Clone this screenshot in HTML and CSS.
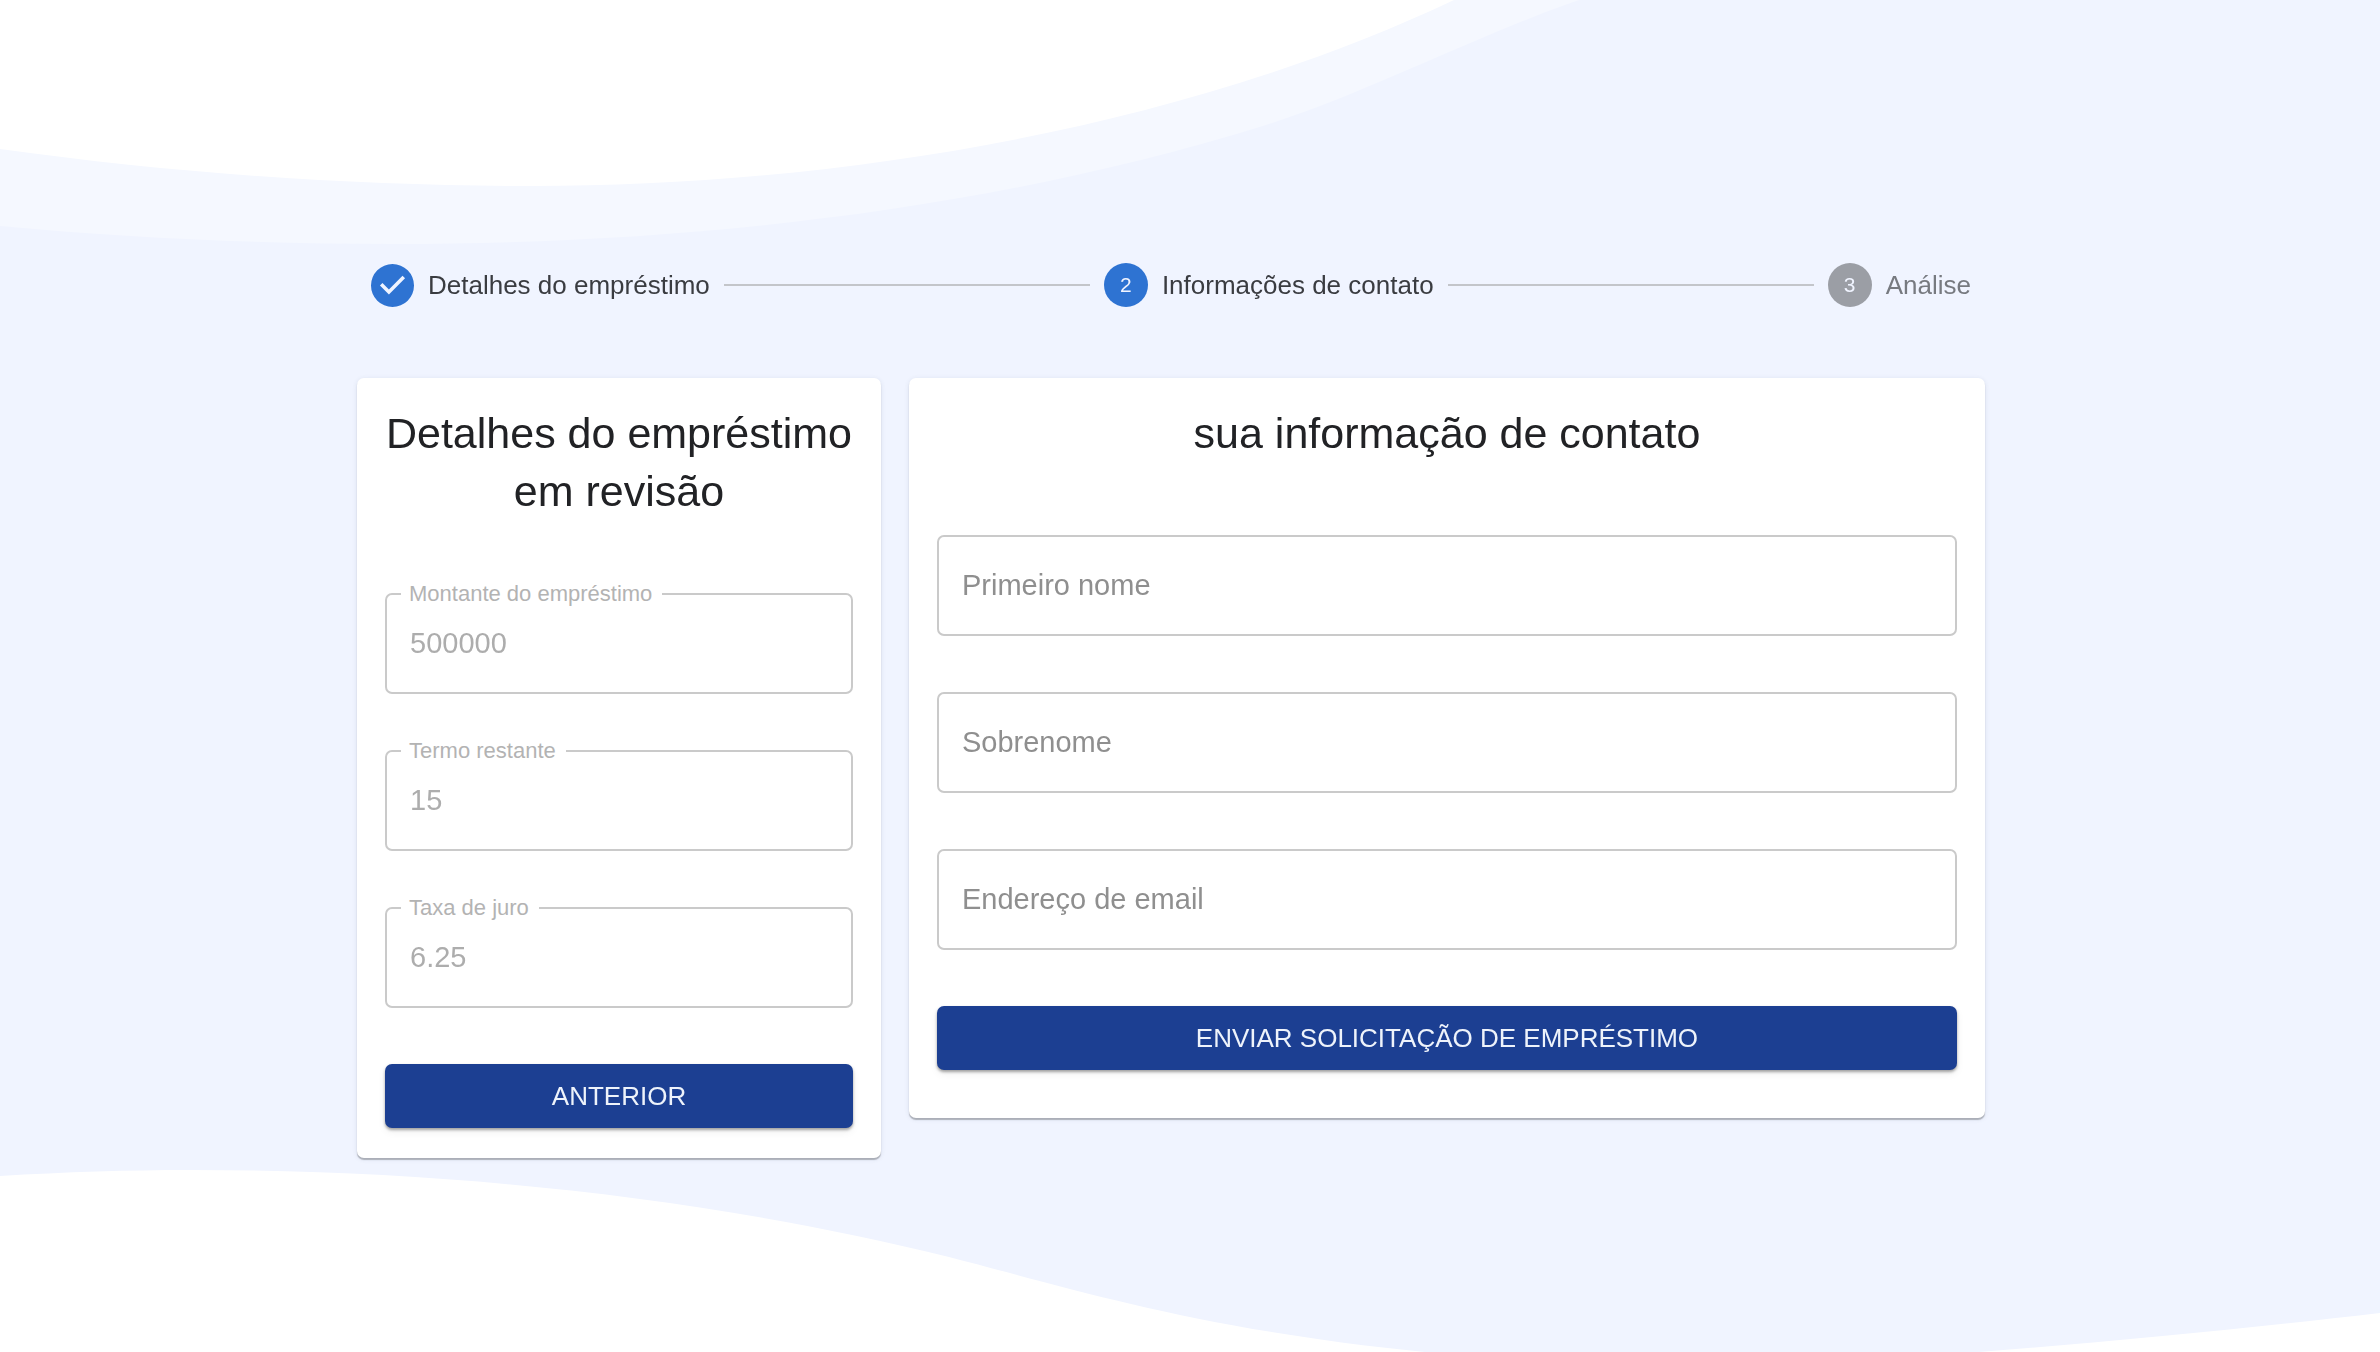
FILE: index.html
```html
<!DOCTYPE html>
<html lang="pt">
<head>
  <meta charset="utf-8">
  <meta name="viewport" content="width=device-width, initial-scale=1">
  <title>Solicitação de empréstimo</title>
  <link rel="stylesheet" href="styles.css">
</head>
<body>
  <svg class="waves" viewBox="0 0 2380 1352" preserveAspectRatio="none" aria-hidden="true">
    <path class="wave-soft" d="M0 0V226C130 238 260 244 395 244C700 244 1000 208 1266 125C1360 96 1480 34 1579 0Z"/>
    <path class="wave" d="M0 0V149C180 174 360 186 531 186C841 186 1184 128 1454 0Z"/>
    <path class="wave" d="M0 1352V1176C65 1172 130 1170 190 1170C460 1170 720 1200 949 1257C1070 1288 1200 1330 1425 1352Z"/>
    <path class="wave" d="M1979 1352C2110 1342 2250 1328 2380 1313V1352Z"/>
  </svg>

  <main class="page">
    <ol class="stepper">
      <li class="step">
        <svg class="step-icon" viewBox="0 0 24 24" role="img" aria-label="Concluído">
          <path d="M12 0a12 12 0 1 0 0 24 12 12 0 0 0 0-24zm-2 17l-5-5 1.400-1.400 3.600 3.600 7.600-7.600L19 8l-9 9z"/>
        </svg>
        <span class="step-label">Detalhes do empréstimo</span>
      </li>
      <li class="connector" aria-hidden="true"></li>
      <li class="step" aria-current="step">
        <span class="step-number">2</span>
        <span class="step-label">Informações de contato</span>
      </li>
      <li class="connector" aria-hidden="true"></li>
      <li class="step step-pending">
        <span class="step-number">3</span>
        <span class="step-label">Análise</span>
      </li>
    </ol>

    <div class="cards">
      <form class="card card-review">
        <h2 class="card-title">Detalhes do empréstimo<br>em revisão</h2>
        <div class="fields">
          <div class="field field-outlined">
            <label for="amount">Montante do empréstimo</label>
            <input id="amount" type="text" value="500000" disabled>
          </div>
          <div class="field field-outlined">
            <label for="term">Termo restante</label>
            <input id="term" type="text" value="15" disabled>
          </div>
          <div class="field field-outlined">
            <label for="rate">Taxa de juro</label>
            <input id="rate" type="text" value="6.25" disabled>
          </div>
          <button class="button" type="button">ANTERIOR</button>
        </div>
      </form>

      <form class="card card-contact">
        <h2 class="card-title">sua informação de contato</h2>
        <div class="fields">
          <div class="field">
            <input id="first-name" type="text" placeholder="Primeiro nome" aria-label="Primeiro nome">
          </div>
          <div class="field">
            <input id="last-name" type="text" placeholder="Sobrenome" aria-label="Sobrenome">
          </div>
          <div class="field">
            <input id="email" type="email" placeholder="Endereço de email" aria-label="Endereço de email">
          </div>
          <button class="button" type="submit">ENVIAR SOLICITAÇÃO DE EMPRÉSTIMO</button>
        </div>
      </form>
    </div>
  </main>
</body>
</html>
```

FILE: styles.css
```css
* {
  box-sizing: border-box;
}

body {
  margin: 0;
  min-height: 100vh;
  background: #f0f4ff;
  color: #212225;
  font-family: "Liberation Sans", Arial, sans-serif;
}

.waves {
  position: fixed;
  inset: 0;
  z-index: -1;
  width: 100%;
  height: 100%;
}

.wave {
  fill: #fff;
}

.wave-soft {
  fill: #f5f8ff;
}

.page {
  display: flex;
  flex-direction: column;
  gap: 71px;
  padding: 263px 16.6% 64px 15%;
}

/* Stepper */
.stepper {
  display: flex;
  align-items: center;
  gap: 14px;
  margin: 0;
  padding: 0 14px;
  list-style: none;
}

.step {
  display: flex;
  align-items: center;
  gap: 14px;
  font-size: 26px;
  line-height: 44px;
  color: #3a3c41;
}

.step-icon {
  width: 43px;
  height: 43px;
  fill: #2e73d2;
}

.step-number {
  width: 44px;
  height: 44px;
  border-radius: 50%;
  background: #2e73d2;
  color: #f0f4ff;
  font-size: 21px;
  text-align: center;
}

.step-pending {
  color: #777a80;
}

.step-pending .step-number {
  background: #9b9ea5;
}

.connector {
  flex: 1;
  height: 2px;
  background: #c3c5ca;
}

/* Cards */
.cards {
  display: grid;
  grid-template-columns: repeat(3, minmax(0, 1fr));
  align-items: start;
  gap: 28px;
}

.card {
  padding: 26px 28px 30px;
  border-radius: 7px;
  background: #fff;
  box-shadow: 0 2px 1px rgba(0, 0, 0, 0.25), 0 1px 5px rgba(60, 70, 110, 0.12);
}

.card-contact {
  grid-column: span 2;
  padding-bottom: 48px;
}

.card-title {
  margin: 0 0 73px;
  font-size: 43px;
  font-weight: 400;
  line-height: 58px;
  text-align: center;
}

.card-review .card-title {
  white-space: nowrap;
}

.fields {
  display: flex;
  flex-direction: column;
  gap: 56px;
}

.field {
  position: relative;
}

.field input {
  display: block;
  width: 100%;
  height: 101px;
  padding: 0 23px;
  border: 2px solid #cacaca;
  border-radius: 7px;
  background: #fff;
  color: #212225;
  font: inherit;
  font-size: 29px;
}

.field input::placeholder {
  color: #8f8f8f;
  opacity: 1;
}

.field input:disabled {
  color: #adadad;
  -webkit-text-fill-color: #adadad;
}

/* The label sits over the top border of the outlined input */
.field-outlined label {
  position: absolute;
  top: -12px;
  left: 16px;
  padding: 0 10px 0 8px;
  background: #fff;
  color: #b3b3b3;
  font-size: 22px;
  line-height: 26px;
}

.button {
  height: 64px;
  border: 0;
  border-radius: 7px;
  background: #1c3f92;
  box-shadow: 0 2px 3px rgba(0, 0, 0, 0.35), 0 4px 8px rgba(0, 0, 0, 0.06);
  color: #eef3fb;
  font: inherit;
  font-size: 26px;
  cursor: pointer;
}
```
